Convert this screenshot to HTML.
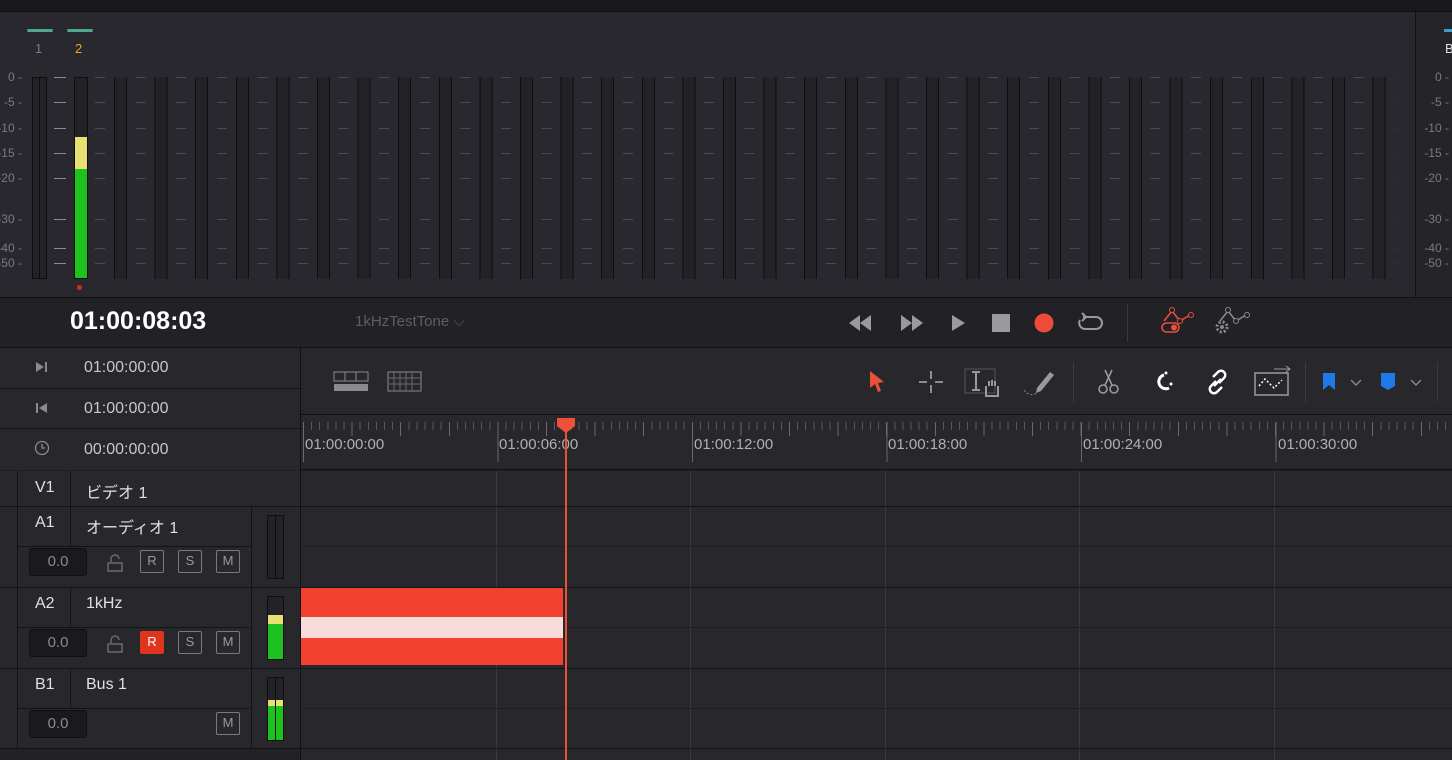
<!DOCTYPE html>
<html><head><meta charset="utf-8"><style>
*{margin:0;padding:0;box-sizing:border-box}
body{width:1452px;height:760px;overflow:hidden;background:#1f1f23;font-family:"Liberation Sans","Noto Sans CJK JP",sans-serif;position:relative;color:#c8c8c8}
.a{position:absolute}
.db{position:absolute;font-size:12px;color:#7a7a80;text-align:right;width:40px;white-space:nowrap}
.dash{position:absolute;height:1px;left:95px;width:1300px;background:repeating-linear-gradient(90deg,#4a4a50 0 10px,transparent 10px 40.6px)}
.tc{position:absolute;font-size:16px;color:#c8c8c8}
.hl{position:absolute;height:1px;background:#141416}
.btn{position:absolute;width:24px;height:23px;border:1.5px solid #7a7a7e;border-radius:2px;font-size:13px;color:#9a9a9e;text-align:center;line-height:20px}
.vol{position:absolute;width:58px;height:28px;background:#1a1a1c;border:1px solid #101012;border-radius:3px;font-size:15px;color:#8a8a8e;text-align:center;line-height:26px}
.lab{position:absolute;font-size:16px;color:#e0e0e0}
</style></head><body>
<div class="a" style="left:0;top:0;width:1452px;height:12px;background:#19191b;border-bottom:1px solid #0e0e10"></div>
<div class="a" style="left:0;top:12px;width:1415px;height:285px;background:#28282e"></div>
<div class="a" style="left:1415px;top:12px;width:37px;height:285px;background:#242429;border-left:1px solid #111"></div>
<div class="a" style="left:27px;top:29px;width:26px;height:3px;background:#4fa88a;border-radius:2px"></div>
<div class="a" style="left:67px;top:29px;width:26px;height:3px;background:#4fa88a;border-radius:2px"></div>
<div class="a" style="left:1444px;top:29px;width:8px;height:3px;background:#3aa0c8"></div>
<div class="a" style="left:35px;top:41px;font-size:13px;color:#7a7a80">1</div>
<div class="a" style="left:75px;top:41px;font-size:13px;color:#e8a82a">2</div>
<div class="a" style="left:1445px;top:41px;font-size:13px;color:#e0e0e0">B</div>
<div class="db" style="left:-18px;top:70px">0 -</div>
<div class="db" style="left:-18px;top:95px">-5 -</div>
<div class="db" style="left:-18px;top:121px">-10 -</div>
<div class="db" style="left:-18px;top:146px">-15 -</div>
<div class="db" style="left:-18px;top:171px">-20 -</div>
<div class="db" style="left:-18px;top:212px">-30 -</div>
<div class="db" style="left:-18px;top:241px">-40 -</div>
<div class="db" style="left:-18px;top:256px">-50 -</div>
<div class="db" style="left:1409px;top:70px">0 -</div>
<div class="db" style="left:1409px;top:95px">-5 -</div>
<div class="db" style="left:1409px;top:121px">-10 -</div>
<div class="db" style="left:1409px;top:146px">-15 -</div>
<div class="db" style="left:1409px;top:171px">-20 -</div>
<div class="db" style="left:1409px;top:212px">-30 -</div>
<div class="db" style="left:1409px;top:241px">-40 -</div>
<div class="db" style="left:1409px;top:256px">-50 -</div>
<div class="a" style="left:54px;top:77px;width:12px;height:1px;background:#8a8a90"></div>
<div class="a" style="left:54px;top:102px;width:12px;height:1px;background:#8a8a90"></div>
<div class="a" style="left:54px;top:128px;width:12px;height:1px;background:#8a8a90"></div>
<div class="a" style="left:54px;top:153px;width:12px;height:1px;background:#8a8a90"></div>
<div class="a" style="left:54px;top:178px;width:12px;height:1px;background:#8a8a90"></div>
<div class="a" style="left:54px;top:219px;width:12px;height:1px;background:#8a8a90"></div>
<div class="a" style="left:54px;top:248px;width:12px;height:1px;background:#8a8a90"></div>
<div class="a" style="left:54px;top:263px;width:12px;height:1px;background:#8a8a90"></div>
<div class="dash" style="top:77px"></div><div class="dash" style="top:102px"></div><div class="dash" style="top:128px"></div><div class="dash" style="top:153px"></div><div class="dash" style="top:178px"></div><div class="dash" style="top:219px"></div><div class="dash" style="top:248px"></div><div class="dash" style="top:263px"></div>
<div class="a" style="left:32px;top:77px;width:15px;height:202px;border:1px solid #0e0e10;background:#232327"></div>
<div class="a" style="left:39px;top:77px;width:1px;height:202px;background:#0e0e10"></div>
<div class="a" style="left:74px;top:77px;width:14px;height:202px;border:1px solid #0e0e10;background:#232327"></div>
<div class="a" style="left:75px;top:137px;width:12px;height:32px;background:#e8e070"></div>
<div class="a" style="left:75px;top:169px;width:12px;height:109px;background:#1ec21e"></div>
<div class="a" style="left:77px;top:285px;width:5px;height:5px;background:#d03020;border-radius:50%"></div>
<div class="a" style="left:114px;top:77px;width:1272px;height:202px;background:repeating-linear-gradient(90deg,#0e0e10 0 1px,#232327 1px 12px,#0e0e10 12px 13px,transparent 13px 40.6px)"></div>
<div class="a" style="left:0;top:297px;width:1452px;height:51px;background:#222226;border-top:1px solid #111;border-bottom:1px solid #111"></div>
<div class="a" style="left:70px;top:307px;font-size:25px;color:#fff;font-weight:bold">01:00:08:03</div>
<div class="a" style="left:355px;top:313px;font-size:15px;color:#5e5e62">1kHzTestTone ⌵</div>
<svg class="a" style="left:845px;top:308px" width="260" height="30">
<path d="M4 15 L15 7 V23Z M15 15 L26 7 V23Z" fill="#9a9a9e"/>
<path d="M56 7 L67 15 L56 23Z M67 7 L78 15 L67 23Z" fill="#9a9a9e"/>
<path d="M107 7 L120 15 L107 23Z" fill="#9a9a9e"/>
<rect x="147" y="6" width="18" height="18" fill="#9a9a9e"/>
<circle cx="199" cy="15" r="9.5" fill="#ee4c3a"/>
<path d="M238 9 H251 a6 6 0 0 1 0 12 H240 a6 6 0 0 1 -5 -9" stroke="#9a9a9e" stroke-width="2" fill="none"/><path d="M237 5 L241 9 L237 13" stroke="#9a9a9e" stroke-width="2" fill="none"/>
</svg>
<div class="a" style="left:1127px;top:304px;width:1px;height:38px;background:#3a3a3e"></div>
<svg class="a" style="left:1158px;top:305px" width="95" height="32">
<path d="M6 16 L14 6 L22 16 L32 10" stroke="#e8503a" stroke-width="1.6" fill="none"/><circle cx="14" cy="5" r="2.5" stroke="#e8503a" fill="#222226"/><circle cx="22" cy="16" r="2.5" stroke="#e8503a" fill="#222226"/><circle cx="33" cy="10" r="2.5" stroke="#e8503a" fill="#222226"/>
<rect x="4" y="18" width="17" height="9" rx="4.5" stroke="#e8503a" stroke-width="1.6" fill="none"/><circle cx="16" cy="22.5" r="3" fill="#e8503a"/>
<path d="M62 16 L70 6 L78 16 L88 10" stroke="#8a8a8e" stroke-width="1.6" fill="none"/><circle cx="70" cy="5" r="2.5" stroke="#8a8a8e" fill="#222226"/><circle cx="78" cy="16" r="2.5" stroke="#8a8a8e" fill="#222226"/><circle cx="89" cy="10" r="2.5" stroke="#8a8a8e" fill="#222226"/>
<circle cx="64" cy="22" r="5" stroke="#8a8a8e" stroke-width="3" stroke-dasharray="2 2" fill="none"/><circle cx="64" cy="22" r="2" fill="#8a8a8e"/>
</svg>
<div class="a" style="left:0;top:348px;width:300px;height:122px;background:#28282c"></div>
<div class="hl" style="left:0;top:388px;width:300px"></div>
<div class="hl" style="left:0;top:428px;width:300px"></div>
<div class="a" style="left:300px;top:348px;width:1px;height:412px;background:#111"></div>
<svg class="a" style="left:35px;top:360px" width="14" height="14"><path d="M1 2 L9 7 L1 12Z" fill="#8a8a8e"/><rect x="10" y="2" width="2" height="10" fill="#8a8a8e"/></svg>
<svg class="a" style="left:35px;top:401px" width="14" height="14"><rect x="1" y="2" width="2" height="10" fill="#8a8a8e"/><path d="M12 2 L4 7 L12 12Z" fill="#8a8a8e"/></svg>
<svg class="a" style="left:34px;top:440px" width="16" height="16"><circle cx="8" cy="8" r="6.5" stroke="#8a8a8e" stroke-width="1.3" fill="none"/><path d="M8 4 V8 H11" stroke="#8a8a8e" stroke-width="1.3" fill="none"/></svg>
<div class="tc" style="left:84px;top:359px">01:00:00:00</div>
<div class="tc" style="left:84px;top:400px">01:00:00:00</div>
<div class="tc" style="left:84px;top:441px">00:00:00:00</div>
<div class="a" style="left:301px;top:348px;width:1151px;height:67px;background:#28282c;border-bottom:1px solid #111"></div>
<svg class="a" style="left:333px;top:370px" width="95" height="24">
<rect x="1" y="2" width="34" height="9" fill="none" stroke="#8a8a8e"/><path d="M12 2V11M23 2V11" stroke="#8a8a8e"/><rect x="1" y="14" width="34" height="7" fill="#8a8a8e"/>
<rect x="55" y="2" width="33" height="19" fill="none" stroke="#8a8a8e"/><path d="M61 2V21M67 2V21M73 2V21M79 2V21M55 8H88M55 14H88" stroke="#6a6a6e"/>
</svg>
<svg class="a" style="left:862px;top:364px" width="440" height="36">
<path d="M8 7 L22 18 L16 19 L19 27 L16 28 L13 20 L8 24Z" fill="#e8503a"/>
<path d="M69 7 V15 M69 21 V29 M57 18 H65 M73 18 H81" stroke="#9a9a9e" stroke-width="1.8"/>
<rect x="103" y="5" width="30" height="24" fill="none" stroke="#55555a"/><path d="M110 8 H118 M114 8 V26 M110 26 H118" stroke="#9a9a9e" stroke-width="2"/><path d="M124 22 V32 H136 V22 M127 22 V17 M130 22 V16 M133 22 V17" stroke="#9a9a9e" stroke-width="2" fill="none"/>
<path d="M162 26 Q168 34 176 28" stroke="#8a8a8e" stroke-dasharray="2 2" fill="none"/><path d="M175 24 L188 8 L192 11 L179 27 L174 29Z" fill="#9a9a9e"/>
<circle cx="241" cy="25" r="4" stroke="#9a9a9e" stroke-width="1.6" fill="none"/><circle cx="252" cy="25" r="4" stroke="#9a9a9e" stroke-width="1.6" fill="none"/><path d="M243 21 L250 6 M250 21 L243 6" stroke="#9a9a9e" stroke-width="1.6"/>
<path d="M302 11 A7 7 0 1 0 307 24" stroke="#fff" stroke-width="3" fill="none"/><circle cx="304" cy="9" r="1.5" fill="#fff"/><circle cx="309" cy="20" r="1.5" fill="#fff"/>
<path d="M354 17 L349 22 a4 4 0 0 0 6 6 L360 23 M357 19 L362 14 a4 4 0 0 0 -6 -6 L351 13 M352 22 L359 15" stroke="#fff" stroke-width="2.4" fill="none"/>
<rect x="393" y="9" width="33" height="22" fill="none" stroke="#9a9a9e" stroke-width="1.5"/><path d="M397 22 L403 15 L412 24 L420 16" stroke="#fff" stroke-width="1.5" stroke-dasharray="2 2" fill="none"/><path d="M412 5 H428 M424 2 L428 5 L424 8" stroke="#9a9a9e" fill="none"/>
</svg>
<div class="a" style="left:1073px;top:362px;width:1px;height:40px;background:#3a3a3e"></div>
<div class="a" style="left:1305px;top:362px;width:1px;height:40px;background:#3a3a3e"></div>
<div class="a" style="left:1437px;top:362px;width:1px;height:40px;background:#3a3a3e"></div>
<svg class="a" style="left:1318px;top:370px" width="110" height="24">
<path d="M5 3 H17 V20 L11 15 L5 20Z" fill="#1f7ae8"/><path d="M33 10 L38 15 L43 10" stroke="#8a8a8e" stroke-width="1.4" fill="none"/>
<path d="M63 3 H77 V16 L70 20 L63 16Z" fill="#1f7ae8"/><path d="M93 10 L98 15 L103 10" stroke="#8a8a8e" stroke-width="1.4" fill="none"/>
</svg>
<div class="a" style="left:301px;top:415px;width:1151px;height:55px;background:#28282c;border-bottom:1px solid #111"></div>
<div class="a" style="left:303px;top:422px;width:1149px;height:8px;background:repeating-linear-gradient(90deg,#5a5a5e 0 1px,transparent 1px 8.1px)"></div>
<div class="a" style="left:303px;top:422px;width:1149px;height:14px;background:repeating-linear-gradient(90deg,#6a6a6e 0 1px,transparent 1px 48.6px)"></div>
<div class="a" style="left:303px;top:422px;width:1149px;height:40px;background:repeating-linear-gradient(90deg,#6a6a6e 0 1px,transparent 1px 194.5px)"></div>
<div class="a" style="left:305px;top:436px;font-size:15px;color:#b0b0b4">01:00:00:00</div>
<div class="a" style="left:499px;top:436px;font-size:15px;color:#b0b0b4">01:00:06:00</div>
<div class="a" style="left:694px;top:436px;font-size:15px;color:#b0b0b4">01:00:12:00</div>
<div class="a" style="left:888px;top:436px;font-size:15px;color:#b0b0b4">01:00:18:00</div>
<div class="a" style="left:1083px;top:436px;font-size:15px;color:#b0b0b4">01:00:24:00</div>
<div class="a" style="left:1278px;top:436px;font-size:15px;color:#b0b0b4">01:00:30:00</div>
<div class="a" style="left:301px;top:471px;width:1151px;height:289px;background:#28282c"></div>
<div class="a" style="left:496px;top:471px;width:1px;height:289px;background:#3a3a3e"></div>
<div class="a" style="left:690px;top:471px;width:1px;height:289px;background:#3a3a3e"></div>
<div class="a" style="left:885px;top:471px;width:1px;height:289px;background:#3a3a3e"></div>
<div class="a" style="left:1079px;top:471px;width:1px;height:289px;background:#3a3a3e"></div>
<div class="a" style="left:1274px;top:471px;width:1px;height:289px;background:#3a3a3e"></div>
<div class="hl" style="left:301px;top:506px;width:1151px"></div>
<div class="hl" style="left:301px;top:546px;width:1151px;background:#202024"></div>
<div class="hl" style="left:301px;top:587px;width:1151px"></div>
<div class="hl" style="left:301px;top:627px;width:1151px;background:#202024"></div>
<div class="hl" style="left:301px;top:668px;width:1151px"></div>
<div class="hl" style="left:301px;top:708px;width:1151px;background:#202024"></div>
<div class="hl" style="left:301px;top:748px;width:1151px"></div>
<div class="a" style="left:301px;top:588px;width:262px;height:77px;background:#f2412e"></div>
<div class="a" style="left:301px;top:617px;width:262px;height:21px;background:#f8dcdc"></div>
<div class="a" style="left:565px;top:424px;width:2px;height:336px;background:#e8503a"></div>
<svg class="a" style="left:555px;top:416px" width="22" height="18"><path d="M2 2 H20 V10 L11 17 L2 10Z" fill="#f0503a"/></svg>
<div class="a" style="left:0;top:471px;width:300px;height:289px;background:#28282c"></div>
<div class="a" style="left:17px;top:471px;width:1px;height:278px;background:#141416"></div>
<div class="a" style="left:70px;top:471px;width:1px;height:35px;background:#141416"></div>
<div class="a" style="left:70px;top:506px;width:1px;height:40px;background:#141416"></div>
<div class="a" style="left:70px;top:587px;width:1px;height:40px;background:#141416"></div>
<div class="a" style="left:70px;top:668px;width:1px;height:40px;background:#141416"></div>
<div class="a" style="left:251px;top:506px;width:1px;height:243px;background:#141416"></div>
<div class="hl" style="left:0;top:506px;width:300px"></div>
<div class="hl" style="left:17px;top:546px;width:234px"></div>
<div class="hl" style="left:0;top:587px;width:300px"></div>
<div class="hl" style="left:17px;top:627px;width:234px"></div>
<div class="hl" style="left:0;top:668px;width:300px"></div>
<div class="hl" style="left:17px;top:708px;width:234px"></div>
<div class="hl" style="left:0;top:748px;width:300px"></div>
<div class="lab" style="left:35px;top:479px">V1</div><div class="lab" style="left:86px;top:479px">ビデオ 1</div>
<div class="lab" style="left:35px;top:514px">A1</div><div class="lab" style="left:86px;top:514px">オーディオ 1</div>
<div class="lab" style="left:35px;top:595px">A2</div><div class="lab" style="left:86px;top:595px">1kHz</div>
<div class="lab" style="left:35px;top:676px">B1</div><div class="lab" style="left:86px;top:676px">Bus 1</div>
<div class="vol" style="left:29px;top:548px">0.0</div>
<div class="vol" style="left:29px;top:629px">0.0</div>
<div class="vol" style="left:29px;top:710px">0.0</div>
<svg class="a" style="left:106px;top:553px" width="20" height="20"><path d="M5 9 V6 a4 4 0 0 1 8 0" stroke="#6a6a6e" stroke-width="1.5" fill="none"/><rect x="2" y="10" width="14" height="8" stroke="#6a6a6e" stroke-width="1.5" fill="none"/></svg>
<svg class="a" style="left:106px;top:634px" width="20" height="20"><path d="M5 9 V6 a4 4 0 0 1 8 0" stroke="#6a6a6e" stroke-width="1.5" fill="none"/><rect x="2" y="10" width="14" height="8" stroke="#6a6a6e" stroke-width="1.5" fill="none"/></svg>
<div class="btn" style="left:140px;top:550px">R</div><div class="btn" style="left:178px;top:550px">S</div><div class="btn" style="left:216px;top:550px">M</div>
<div class="btn" style="left:140px;top:631px;background:#e0341e;border-color:#e0341e;color:#fff">R</div><div class="btn" style="left:178px;top:631px">S</div><div class="btn" style="left:216px;top:631px">M</div>
<div class="btn" style="left:216px;top:712px">M</div>
<div class="a" style="left:267px;top:515px;width:17px;height:64px;border:1px solid #0e0e10;background:#232327"></div>
<div class="a" style="left:275px;top:515px;width:1px;height:64px;background:#0e0e10"></div>
<div class="a" style="left:267px;top:596px;width:17px;height:64px;border:1px solid #0e0e10;background:#232327"></div>
<div class="a" style="left:268px;top:615px;width:15px;height:9px;background:#e8e070"></div>
<div class="a" style="left:268px;top:624px;width:15px;height:35px;background:#1ec21e"></div>
<div class="a" style="left:267px;top:677px;width:17px;height:64px;border:1px solid #0e0e10;background:#232327"></div>
<div class="a" style="left:268px;top:700px;width:15px;height:6px;background:#e8e070"></div>
<div class="a" style="left:268px;top:706px;width:15px;height:34px;background:#1ec21e"></div>
<div class="a" style="left:275px;top:677px;width:1px;height:64px;background:#0e0e10"></div>
<div class="a" style="left:0;top:749px;width:300px;height:11px;background:#222226"></div>
</body></html>
